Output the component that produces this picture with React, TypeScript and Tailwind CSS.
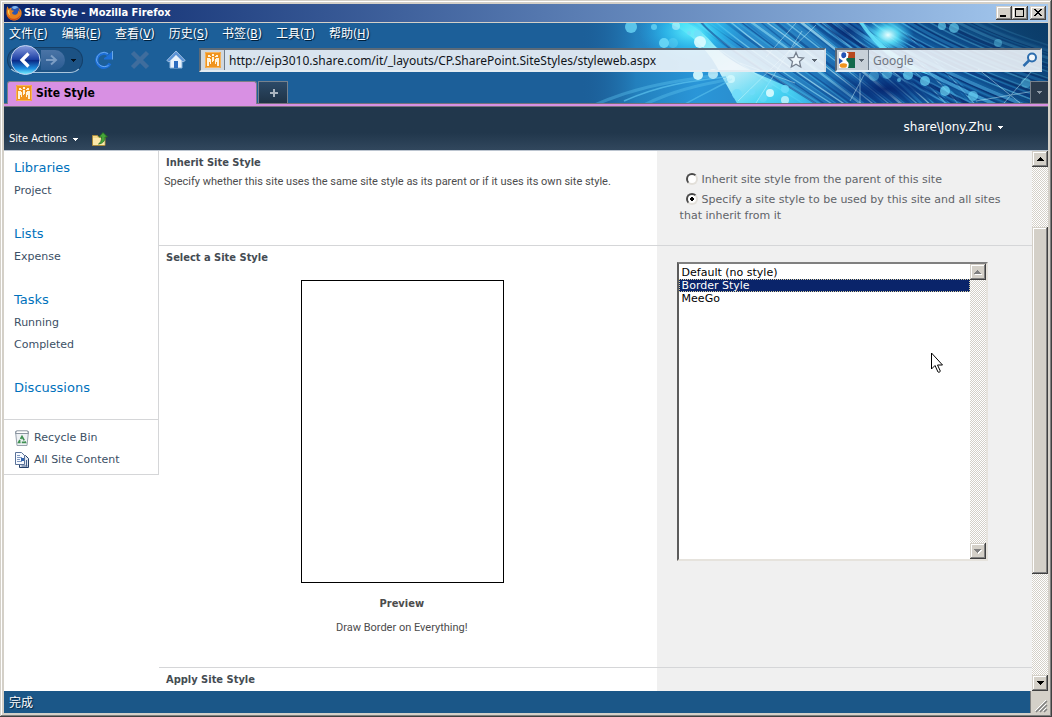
import React from "react";

const verdana = "font-['DejaVu_Sans',sans-serif]";
const tahoma = "font-['DejaVu_Sans_Condensed','Noto_Sans_CJK_SC',sans-serif]";
const tahomaLight = "font-['Noto_Sans','Noto_Sans_CJK_SC',sans-serif]";
const bodyFont = "font-['Roboto','Noto_Sans_CJK_SC',sans-serif]";
const bevel =
  "bg-[#d4d0c8] shadow-[inset_-1px_-1px_0_#404040,inset_1px_1px_0_#d4d0c8,inset_-2px_-2px_0_#808080,inset_2px_2px_0_#ffffff]";
const dither =
  "bg-[repeating-conic-gradient(#d4d0c8_0_25%,#ffffff_0_50%)] bg-[length:2px_2px]";

function Caret({ className = "" }: { className?: string }) {
  return (
    <svg width="7" height="4" viewBox="0 0 7 4" className={className} shapeRendering="crispEdges" aria-hidden="true">
      <path d="M0 0h7v1H6v1H5v1H4v1H3V3H2V2H1V1H0z" fill="currentColor" />
    </svg>
  );
}

function SmallCaret() {
  return (
    <svg width="5" height="3" viewBox="0 0 5 3" shapeRendering="crispEdges" aria-hidden="true">
      <path d="M0 0h5v1H4v1H3v1H2V2H1V1H0z" fill="currentColor" />
    </svg>
  );
}

function FirefoxIcon() {
  return (
    <svg width="16" height="16" viewBox="0 0 16 16" aria-hidden="true">
      <circle cx="8.5" cy="7.5" r="6.5" fill="#2b55b0" />
      <path d="M6 2c2-1.600 5-1.200 6.500.5C11 2.500 10 4 8.500 4S6.500 3 6 2z" fill="#7fb4ea" />
      <path
        d="M1.200 1.200 3 4c.8-1 2-1.200 3-1-.8.8-.9 1.500-.5 2.200.8.3 1.800.2 2.500.6-.3 1-1.500 1.200-2 2 .4 1.700 2.500 2.400 4.300 1.600 1.500-.7 2-2.200 1.700-4 .8.500 1.300 1.200 1.500 2 .2-1.500-.2-3.200-1.200-4.600C15 4 16 6.500 15.600 9c-.6 4-3.900 6.600-7.800 6.500C3.500 15.300.4 12 .4 8c0-2.200.1-4 .8-6.800z"
        fill="#e8801c"
      />
      <path d="M1 8c.5 3.800 4 6.300 8 5.800 2.500-.4 4.600-2 5.500-4.300-.3 3.500-3.300 5.700-6.700 5.700C3.800 15.200.8 12 1 8z" fill="#c9481a" />
      <path d="M2 5l1.500.5C3 7 3.300 9 4.500 10.500 2.500 9.800 1.600 7.500 2 5z" fill="#fcd054" />
    </svg>
  );
}

function SiteIcon() {
  return (
    <svg width="16" height="16" viewBox="0 0 16 16" aria-hidden="true">
      <rect width="16" height="16" rx="1" fill="#f0941e" />
      <rect x=".5" y=".5" width="15" height="15" rx="1" fill="none" stroke="#f6b45c" />
      <g fill="#fff3dc" shapeRendering="crispEdges">
        <path d="M3 3h2v2H3zM11 3h2v2h-2zM7 2h2v2H7zM5 4h1v1H5zM10 4h1v1h-1zM2 6h3v1h1v5H5v-2H4v4H2zM11 6h3v8h-2v-4h-1v2h-1V7h1zM7 5h2v4H8v1H7z" />
      </g>
    </svg>
  );
}

const midStreaks = Array.from({ length: 46 }, (_, i) => i);
const rightStreaks = Array.from({ length: 44 }, (_, i) => i);
const midColors = ["#1f76bd", "#7fd0ee", "#2f93cf", "#12589f", "#a9e2f5", "#3aa5d8", "#0f4b92"];
const rightColors = ["#0d4c93", "#4aa6da", "#0a3a82", "#2176b8", "#07296f", "#3d93cb", "#125a9c"];
const bubbles = [
  [51, 4, 6, 0.75], [74, 4, 3, 0.7], [84, 20, 5, 0.85], [93, 20, 5, 0.35], [109, 10, 2, 0.9],
  [118, 11, 4, 0.6], [157, 71, 5, 0.8], [172, 69, 3, 0.8], [183, 75, 4, 0.5], [190, 61, 3, 0.6],
  [205, 66, 4, 0.85], [294, 53, 5, 0.4], [307, 51, 5, 0.5], [328, 52, 5, 0.7], [345, 58, 5, 0.7],
  [365, 68, 5, 0.7], [393, 73, 5, 0.6], [362, 3, 4, 0.6], [374, 5, 5, 0.6], [418, 20, 4, 0.4],
  [446, 60, 5, 0.4], [319, 57, 2, 0.6],
];
const whiteBubbles = [
  [120, 19, 6, 0.9], [118, 52, 5, 0.9], [133, 51, 5, 0.7], [151, 56, 4, 0.7], [190, 70, 4, 0.9],
  [205, 77, 4, 0.7], [96, 3, 4, 0.5],
];

function ThemeArt() {
  return (
    <svg
      className="pointer-events-none absolute right-0 top-0 h-full w-[468px]"
      viewBox="0 0 468 80"
      preserveAspectRatio="none"
      aria-hidden="true"
    >
      <defs>
        <linearGradient id="sky" x1="0" x2="1" y1="0" y2="0">
          <stop offset="0" stopColor="#1c5f99" stopOpacity="0" />
          <stop offset=".12" stopColor="#2380bd" />
          <stop offset=".25" stopColor="#2a96d8" />
          <stop offset=".45" stopColor="#2a85c4" />
          <stop offset=".62" stopColor="#1257a0" />
          <stop offset=".85" stopColor="#145a95" />
          <stop offset="1" stopColor="#0c4273" />
        </linearGradient>
        <linearGradient id="band" x1="0" x2="1" y1="0" y2="1">
          <stop offset="0" stopColor="#2fe0f6" />
          <stop offset=".5" stopColor="#e2ffff" />
          <stop offset=".8" stopColor="#4fe2fa" />
          <stop offset="1" stopColor="#38b8ee" />
        </linearGradient>
        <radialGradient id="shine">
          <stop offset="0" stopColor="#5ff2ff" />
          <stop offset=".5" stopColor="#2fc4f2" stopOpacity=".7" />
          <stop offset="1" stopColor="#20a8e8" stopOpacity="0" />
        </radialGradient>
        <radialGradient id="flare">
          <stop offset="0" stopColor="#eaffff" />
          <stop offset=".4" stopColor="#5be6fb" stopOpacity=".85" />
          <stop offset="1" stopColor="#20a8e8" stopOpacity="0" />
        </radialGradient>
        <radialGradient id="deep">
          <stop offset="0" stopColor="#04206a" />
          <stop offset="1" stopColor="#06307c" stopOpacity="0" />
        </radialGradient>
        <linearGradient id="dusk" x1="0" x2="1" y1="1" y2="0">
          <stop offset=".4" stopColor="#0b3c68" stopOpacity="0" />
          <stop offset="1" stopColor="#0b3c68" />
        </linearGradient>
      </defs>
      <rect width="468" height="80" fill="url(#sky)" />
      <g fill="none">
        {midStreaks.map((i) => (
          <path
            key={i}
            d={`M${92 + i * 5} -4Q${140 + i * 5} ${30 + (i % 3) * 3} ${225 + i * 4} 84`}
            stroke={midColors[i % 7]}
            strokeWidth={i % 5 === 0 ? 2.500 : 1.300}
            opacity=".7"
          />
        ))}
        {rightStreaks.map((i) => (
          <path
            key={i}
            d={`M${225 + i * 4} ${-6}Q${285 + i * 4} ${44 - i * 0.4} ${400 + i * 5} ${100 - i}`}
            stroke={rightColors[i % 7]}
            strokeWidth={i % 4 === 0 ? 3.500 : 1.500}
            opacity=".75"
          />
        ))}
      </g>
      <rect x="330" width="138" height="80" fill="url(#dusk)" />
      <ellipse cx="305" cy="66" rx="66" ry="20" fill="url(#deep)" opacity=".9" />
      <ellipse cx="268" cy="8" rx="20" ry="14" fill="url(#deep)" opacity=".7" />
      <ellipse cx="112" cy="8" rx="54" ry="32" fill="url(#shine)" />
      <path d="M84 -2C110 8 130 28 141 52L158 82H236C212 58 160 52 134 22C126 12 116 4 104 -2z" fill="url(#band)" opacity=".85" />
      <path d="M120 -2C140 22 190 52 238 82" fill="none" stroke="#12488f" strokeWidth="2" opacity=".6" />
      <ellipse cx="308" cy="12" rx="26" ry="20" fill="url(#flare)" />
      <path d="M282 -2C296 20 320 36 350 52L330 46C305 34 290 16 278 -2z" fill="#6beaff" opacity=".8" />
      <g fill="none" stroke="#5cc3ee">
        <path d="M10 84C50 66 80 60 138 52" strokeWidth="3" opacity=".4" />
        <path d="M44 78C80 62 110 58 146 54" strokeWidth="1.500" opacity=".7" />
        <path d="M60 84C90 68 120 62 150 56" strokeWidth="3" opacity=".4" />
        <path d="M100 84C120 72 135 66 152 56" strokeWidth="1.500" opacity=".6" />
      </g>
      <g fill="none" stroke="#d6fbff" opacity=".45">
        <path d="M158 78L236 2M176 80L222 8M160 40L215 60M216 0L186 34M398 46L440 80M424 80L452 48M396 78L466 66" />
        <path d="M280 50V84M270 78L284 52" />
      </g>
      {bubbles.map(([x, y, r, o]) => (
        <circle key={`${x}-${y}`} cx={x} cy={y} r={r} fill="#6fdcfa" opacity={o} />
      ))}
      {whiteBubbles.map(([x, y, r, o]) => (
        <circle key={`${x}-${y}`} cx={x} cy={y} r={r} fill="#dcfcff" opacity={o} />
      ))}
    </svg>
  );
}

function TitleBar() {
  const btn = `${bevel} flex h-[14px] w-4 items-center justify-center text-black`;
  return (
    <div className="flex h-[18px] items-center bg-linear-to-r from-[#0a246a] to-[#a6caf0] pl-[2px] pr-[2px]">
      <FirefoxIcon />
      <h1 className={`${tahoma} ml-[2px] flex-1 text-[11px] font-bold text-white`}>Site Style - Mozilla Firefox</h1>
      <button aria-label="Minimize" className={btn}>
        <svg width="16" height="14" shapeRendering="crispEdges"><path d="M4 9h6v2H4z" /></svg>
      </button>
      <button aria-label="Maximize" className={btn}>
        <svg width="16" height="14" shapeRendering="crispEdges"><path fillRule="evenodd" d="M3 2h9v9H3zM4 4v6h7V4z" /></svg>
      </button>
      <button aria-label="Close" className={`${btn} ml-[2px]`}>
        <svg width="16" height="14" shapeRendering="crispEdges">
          <path d="M4 3h2v1h1v1h2V4h1V3h2v1h-1v1h-1v1H9v1h1v1h1v1h1v1h-2V9H9V8H7v1H6v1H4V9h1V8h1V7h1V6H6V5H5V4H4z" />
        </svg>
      </button>
    </div>
  );
}

const menus: [string, string][] = [
  ["文件", "F"],
  ["编辑", "E"],
  ["查看", "V"],
  ["历史", "S"],
  ["书签", "B"],
  ["工具", "T"],
  ["帮助", "H"],
];

function MenuBar() {
  return (
    <nav className={`${tahoma} flex h-[21px] items-center gap-[14px] pl-[5px] text-xs text-white`}>
      {menus.map(([label, key]) => (
        <button key={key} className="[text-shadow:1px_1px_1px_#00203c]">
          {label}(<u>{key}</u>)
        </button>
      ))}
    </nav>
  );
}

function Toolbar() {
  const field =
    "flex h-6 items-stretch border-2 border-t-[#5c6a78] border-l-[#5c6a78] border-r-[#d4dde6] border-b-[#e4ecf2] bg-[#f4f7fa]/88";
  return (
    <div className="flex h-8 items-center pr-[6px]">
      <div className="mx-[3px] flex h-[26px] w-[76px] items-center rounded-full border border-[#143f68] border-b-[#a9c6de] bg-[#1c5284]">
        <button aria-label="Back" className="-my-1 ml-[2px] shrink-0">
          <svg width="31" height="32" viewBox="0 0 31 32">
            <defs>
              <linearGradient id="orb" x1="0" y1="0" x2="0" y2="1">
                <stop offset="0" stopColor="#8a9fe0" />
                <stop offset=".48" stopColor="#1c3fa4" />
                <stop offset=".52" stopColor="#0a2a86" />
                <stop offset=".8" stopColor="#1d8fe0" />
                <stop offset="1" stopColor="#7ff4ff" />
              </linearGradient>
            </defs>
            <circle cx="15.5" cy="16" r="14.5" fill="url(#orb)" stroke="#c3d4f0" />
            <path d="M18.500 9.500L12 16l6.500 6.500" fill="none" stroke="#fff" strokeWidth="3.200" />
          </svg>
        </button>
        <button aria-label="Forward" className="h-5 w-6 rounded-r-full bg-linear-to-b from-[#4a74a6] to-[#2a5c93]">
          <svg width="24" height="20" viewBox="0 0 24 20">
            <path d="M5 10h9M10 5.500l5 4.500-5 4.500" fill="none" stroke="#7c9dc4" strokeWidth="2" />
          </svg>
        </button>
        <button aria-label="Recent pages" className="ml-[6px] text-[#04111f]">
          <SmallCaret />
        </button>
      </div>
      <button aria-label="Reload" className="flex w-9 justify-center">
        <svg width="20" height="20" viewBox="0 0 20 20">
          <path d="M16 13.500A7 7 0 1 1 14 4.800" fill="none" stroke="#1c6fd8" strokeWidth="3" />
          <path d="M18.500 1v8.500h-8.500V8L12.500 6.500z" fill="#1c6fd8" />
          <path d="M14.500 15.500A8 8 0 0 1 2.500 10A7.500 7.500 0 0 1 14 3.500M18.500 1v8.500" fill="none" stroke="#7db7f3" strokeWidth=".8" />
        </svg>
      </button>
      <button aria-label="Stop" className="flex w-9 justify-center">
        <svg width="20" height="20" viewBox="0 0 20 20">
          <path d="M2.500 2.500l15 15M17.500 2.500l-15 15" stroke="#3f6d9d" strokeWidth="4.500" />
        </svg>
      </button>
      <button aria-label="Home" className="flex w-9 justify-center">
        <svg width="20" height="20" viewBox="0 0 20 20">
          <path d="M4 10v8h12v-8l-6-6z" fill="#e8f2fc" stroke="#8ab4dd" />
          <path d="M10 1L.8 10.500 3 12l7-7 7 7 2.200-1.500z" fill="#5b93d6" stroke="#b4cdea" strokeWidth=".8" />
          <path d="M8 11h4v7H8z" fill="#2b6cc0" />
        </svg>
      </button>
      <form className={`${field} ml-[5px] flex-1`} onSubmit={(e) => e.preventDefault()}>
        <span className="flex w-6 items-center justify-center border-r border-[#6f7c8a] bg-[#cdd3da]/80">
          <SiteIcon />
        </span>
        <input
          aria-label="Address"
          defaultValue="http://eip3010.share.com/it/_layouts/CP.SharePoint.SiteStyles/styleweb.aspx"
          className={`${tahomaLight} min-w-0 flex-1 bg-transparent pt-px pl-1 text-xs text-[#10141a] outline-none`}
        />
        <button aria-label="Bookmark" type="button" className="flex items-center">
          <svg width="18" height="18" viewBox="0 0 18 18">
            <path d="M9 1.500l2.200 5 5.300.5-4 3.600 1.200 5.400L9 13.200 4.300 16l1.200-5.400-4-3.600 5.300-.5z" fill="#eef6fb" stroke="#76808e" strokeWidth="1.300" />
          </svg>
        </button>
        <button aria-label="History list" type="button" className="flex w-[19px] items-center justify-center text-[#5a6470]">
          <SmallCaret />
        </button>
      </form>
      <form className={`${field} ml-[9px] w-[207px]`} onSubmit={(e) => e.preventDefault()}>
        <button type="button" aria-label="Search engine" className="flex w-8 items-center gap-1 border-r border-[#6f7c8a] bg-[#c3cad2]/80 pl-[2px] text-[#5a6470]">
          <svg width="16" height="16" viewBox="0 0 16 16">
            <rect width="16" height="16" fill="#fff" />
            <path d="M8 0h8v6H9z" fill="#b8491f" />
            <path d="M7 6h9v10H9z" fill="#13694a" />
            <path d="M0 6l4 3-4 3z" fill="#2453b5" />
            <ellipse cx="4.800" cy="3.200" rx="2.500" ry="3" fill="#2453b5" />
            <ellipse cx="4.500" cy="13.500" rx="3.800" ry="2.300" fill="#f0941e" />
            <path d="M5 7c3-1 4-3 3.500-6M4 9c4 0 6 2 4.500 6" fill="none" stroke="#fff" strokeWidth="1.800" />
          </svg>
          <SmallCaret />
        </button>
        <input
          aria-label="Search"
          placeholder="Google"
          className={`${tahomaLight} min-w-0 flex-1 bg-transparent pt-px pl-1 text-xs outline-none placeholder:text-[#6f7580]`}
        />
        <button aria-label="Go" className="pr-[2px]">
          <svg width="16" height="16" viewBox="0 0 16 16">
            <circle cx="10" cy="5.500" r="4" fill="#f3f8fb" stroke="#2c6dae" strokeWidth="2" />
            <path d="M7 8.500L1.500 14" stroke="#2c6dae" strokeWidth="2.500" />
          </svg>
        </button>
      </form>
    </div>
  );
}

function TabStrip() {
  return (
    <div className="mt-[5px] flex h-[22px] items-start pl-[3px]">
      <button
        className={`${tahoma} relative z-10 -mb-px flex h-[23px] w-[250px] items-center gap-1 rounded-t-[3px] border border-b-0 border-[#7d8088] bg-[#d890e3] pl-2 text-xs font-bold text-black`}
      >
        <SiteIcon />
        Site Style
      </button>
      <button
        aria-label="New tab"
        className="ml-px flex h-[22px] w-[30px] items-center justify-center border border-b-0 border-[#77828e] bg-linear-to-b from-[#2c4a68] to-[#1f3346]"
      >
        <svg width="9" height="9" shapeRendering="crispEdges">
          <path d="M4 1h2v3h3v2H6v3H4V6H1V4h3z" fill="#aab4bf" />
        </svg>
      </button>
      <span className="flex-1" />
      <button
        aria-label="All tabs"
        className="flex h-[22px] w-[18px] items-center justify-center border border-b-0 border-r-0 border-[#77828e] bg-[#2b3b4c] text-[#8f9aa6]"
      >
        <SmallCaret />
      </button>
    </div>
  );
}

function Ribbon() {
  return (
    <header className="flex h-11 items-start justify-between border-b border-[#bcc5d0] bg-linear-to-b from-[#21374c] from-60% to-[#31475d] text-white">
      <div className="mt-[21px] flex h-[22px] items-center pl-[5px]">
        <button className={`${tahoma} flex items-center gap-[6px] text-[11px]`}>
          Site Actions
          <SmallCaret />
        </button>
        <button aria-label="Navigate up" className="ml-[14px]">
          <svg width="16" height="14" viewBox="0 0 16 14">
            <path d="M.5 3.500h5l1 1.500H13v8.500H.5z" fill="#f3d98a" stroke="#a88a3c" />
            <path d="M1 6h11.500v7H1z" fill="#fbe9ab" />
            <path d="M11 .5l4.500 4.500h-2.500c0 4-2 6.500-6.500 7 2.500-1.500 3-3.500 3-7H7z" fill="#47a53a" stroke="#256e20" strokeWidth=".8" />
          </svg>
        </button>
      </div>
      <button className={`${verdana} mt-3 mr-[45px] flex items-center gap-[6px] text-xs leading-4`}>
        share\Jony.Zhu
        <SmallCaret />
      </button>
    </header>
  );
}

const navGroups = [
  { title: "Libraries", items: ["Project"] },
  { title: "Lists", items: ["Expense"] },
  { title: "Tasks", items: ["Running", "Completed"] },
  { title: "Discussions", items: [] },
];

function Sidebar() {
  return (
    <nav className={`${verdana} w-[155px] shrink-0 self-start border-r border-b border-[#d5d6d8] pb-[3px] text-[11px] leading-[22px] text-[#3b4f65]`}>
      <div className="border-b border-[#d5d6d8] pt-[5px] pb-[19px]">
        {navGroups.map((g) => (
          <section key={g.title} className="mb-5 pl-[10px] last:mb-0">
            <h2 className="text-[13px] leading-[23px] text-[#0072bc]"><a href="#nav">{g.title}</a></h2>
            <ul className="pt-px">
              {g.items.map((item) => (
                <li key={item}><a href="#nav">{item}</a></li>
              ))}
            </ul>
          </section>
        ))}
      </div>
      <ul className="pl-[10px] pt-[7px]">
        <li>
          <a href="#bin" className="flex items-center gap-1">
            <svg width="16" height="16" viewBox="0 0 16 16">
              <path d="M1.500 1.500h13l-1.500 14H3z" fill="#eef1f4" stroke="#98a2ad" />
              <path d="M2.500.8h11l1 2.700h-13z" fill="#fff" stroke="#7f8a96" strokeWidth=".9" />
              <path d="M8 6.500l3.300 5.800H4.700z" fill="none" stroke="#3f9152" strokeWidth="1.700" strokeDasharray="4.500 1.200" />
            </svg>
            Recycle Bin
          </a>
        </li>
        <li>
          <a href="#all" className="flex items-center gap-1">
            <svg width="16" height="16" viewBox="0 0 16 16">
              <path d="M5.500 3.500h6l3 3v9h-9z" fill="#dfe6f0" stroke="#24406a" />
              <path d="M1.500.5h6l3 3v9h-9z" fill="#f7faff" stroke="#5a7299" />
              <path d="M3 3.500h3M3 5.500h5M3 7.500h3M3 9.500h5" stroke="#7f98bf" />
              <path d="M7 6h3v3H7z" fill="#2f62ae" />
              <path d="M12.500 8v6.500M7.500 14h6" stroke="#46618c" />
            </svg>
            All Site Content
          </a>
        </li>
      </ul>
    </nav>
  );
}

function Radio({ label, checked }: { label: string; checked?: boolean }) {
  return (
    <label className="block">
      <input
        type="radio"
        name="inherit"
        defaultChecked={checked}
        className="mr-1 ml-[6px] h-3 w-3 appearance-none rounded-full border-2 border-t-[#4a4a4a] border-l-[#4a4a4a] border-r-[#e2dfd9] border-b-[#e2dfd9] bg-white align-[-2px] checked:bg-[radial-gradient(circle,#000_2px,#fff_2px)]"
      />
      {label}
    </label>
  );
}

function StyleList() {
  return (
    <div className="relative mt-4 ml-5 flex h-[299px] w-[311px] border-2 border-t-[#808080] border-l-[#5c5c5c] border-r-[#e6e3dd] border-b-[#e6e3dd] bg-white">
      <select
        size={20}
        aria-label="Select a Site Style"
        defaultValue="Border Style"
        className={`${verdana} min-w-0 flex-1 appearance-none overflow-hidden bg-white pt-[2px] text-[11px] leading-[13px] text-black outline-none`}
      >
        {["Default (no style)", "Border Style", "MeeGo"].map((o) => (
          <option
            key={o}
            className="h-[13px] min-h-0 px-[3px] py-0 leading-[13px] checked:bg-[linear-gradient(#0a246a,#0a246a)] checked:outline checked:-outline-offset-1 checked:outline-dotted checked:outline-[#d9cfa0] checked:[-webkit-text-fill-color:#ffffff]"
          >
            {o}
          </option>
        ))}
      </select>
      <div className={`flex w-4 flex-col justify-between ${dither}`}>
        <span className={`${bevel} flex h-4 items-center justify-center text-[#808080]`}>
          <Caret className="rotate-180 drop-shadow-[-1px_-1px_0_#ffffff]" />
        </span>
        <span className={`${bevel} flex h-4 items-center justify-center text-[#808080]`}>
          <Caret className="drop-shadow-[1px_1px_0_#ffffff]" />
        </span>
      </div>
      <svg className="pointer-events-none absolute top-[88px] left-[252px]" width="13" height="22" viewBox="0 0 13 22" aria-hidden="true">
        <path d="M.5 1v16l3.500-3.500 3 6.500c.6.700 2.400 0 2.300-1l-2.800-6H11.500z" fill="#fff" stroke="#000" />
      </svg>
    </div>
  );
}

function Settings() {
  const heading = `${tahoma} pl-[7px] text-[11px] leading-[14px] font-bold text-[#444b52]`;
  const row = "grid grid-cols-[57fr_43fr] border-b border-[#d5d6d8]";
  return (
    <main className="min-w-0 flex-1 text-[11px] leading-[14px] text-[#4c4c4c]">
      <section className={row}>
        <div className="pt-[5px] pb-14">
          <h2 className={heading}>Inherit Site Style</h2>
          <p className={`${bodyFont} mt-[5px] pl-[5px]`}>
            Specify whether this site uses the same site style as its parent or if it uses its own site style.
          </p>
        </div>
        <div className={`${verdana} flex flex-col gap-1 bg-[#f0f0f0] pt-[21px] pr-3 pl-[23px] leading-4 text-[#5f6368]`}>
          <Radio label="Inherit site style from the parent of this site" />
          <Radio checked label="Specify a site style to be used by this site and all sites that inherit from it" />
        </div>
      </section>
      <section className={row}>
        <div className="pt-[5px]">
          <h2 className={heading}>Select a Site Style</h2>
          <figure className="mt-[15px] flex flex-col items-center pr-[10px] pb-8">
            <div className="h-[303px] w-[203px] border border-black" />
            <figcaption className="flex flex-col items-center gap-[10px] pt-[14px] pr-[2px]">
              <b className={tahoma}>Preview</b>
              <span className={bodyFont}>Draw Border on Everything!</span>
            </figcaption>
          </figure>
        </div>
        <div className="bg-[#f0f0f0]">
          <StyleList />
        </div>
      </section>
      <section className="grid grid-cols-[57fr_43fr]">
        <h2 className={`${heading} pt-[5px] pb-6`}>Apply Site Style</h2>
        <div className="bg-[#f0f0f0]" />
      </section>
    </main>
  );
}

function PageScrollbar() {
  return (
    <div className={`flex w-4 shrink-0 flex-col ${dither}`}>
      <button aria-label="Scroll up" className={`${bevel} flex h-4 items-center justify-center text-black`}>
        <Caret className="rotate-180" />
      </button>
      <span className="grow-[60]" />
      <span className={`${bevel} grow-[346]`} />
      <span className="grow-[101]" />
      <button aria-label="Scroll down" className={`${bevel} flex h-4 items-center justify-center text-black`}>
        <Caret />
      </button>
    </div>
  );
}

export default function App() {
  return (
    <div className={`${bevel} flex h-screen flex-col p-1`}>
      <TitleBar />
      <div className="relative mt-px bg-[#1c5f99]">
        <ThemeArt />
        <div className="relative">
          <MenuBar />
          <Toolbar />
          <TabStrip />
        </div>
      </div>
      <div className="h-1 border-y border-[#77727c] bg-[#d890e3]" />
      <Ribbon />
      <div className="flex min-h-0 flex-1 overflow-hidden bg-white">
        <Sidebar />
        <Settings />
        <PageScrollbar />
      </div>
      <footer className="flex h-[22px] shrink-0 bg-[#d4d0c8]">
        <p className={`${tahoma} flex flex-1 items-center border-r border-[#808080] bg-[#1b5788] pl-[5px] pt-[2px] text-xs text-white [text-shadow:1px_1px_1px_#00203c]`}>
          完成
        </p>
        <svg width="17" height="22" aria-hidden="true">
          <path d="M5 21L16 10M9 21l7-7M13 21l3-3" stroke="#808080" strokeWidth="1.500" />
          <path d="M4 20L15 9M8 20l7-7M12 20l3-3" stroke="#fff" />
        </svg>
      </footer>
    </div>
  );
}
